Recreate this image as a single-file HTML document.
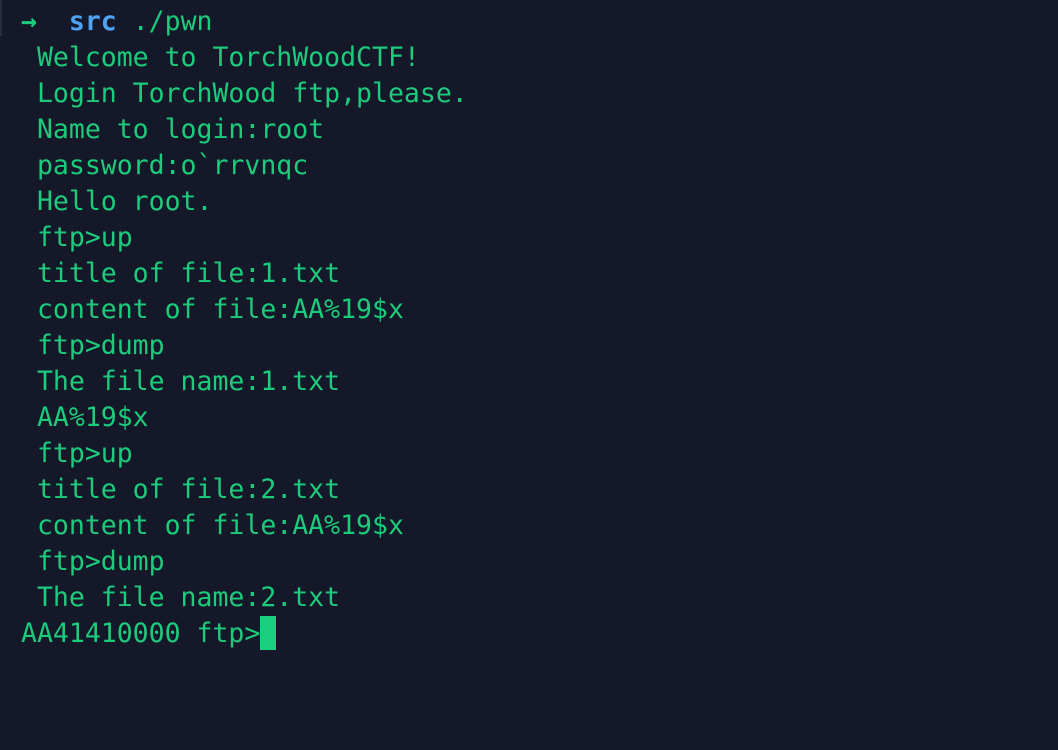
<!DOCTYPE html>
<html><head><style>
html,body{margin:0;padding:0;background:#151829;width:1058px;height:750px;overflow:hidden}
.t{position:absolute;left:21px;top:4px;font-family:"DejaVu Sans Mono","Liberation Mono",monospace;font-size:26.5px;line-height:36px;color:#1ccb7c;white-space:pre}
.b{color:#4da3f2;font-weight:bold}
.a{font-weight:bold}
.c{display:inline-block;width:16px;height:34px;background:#19d07e;vertical-align:-8px}
.edge{position:absolute;left:0;top:0;width:2px;height:36px;background:#2a2d3d}
</style></head><body>
<div class="edge"></div>
<div class="t"><span class="a">→</span>  <span class="b">src</span> ./pwn
 Welcome to TorchWoodCTF!
 Login TorchWood ftp,please.
 Name to login:root
 password:o`rrvnqc
 Hello root.
 ftp&gt;up
 title of file:1.txt
 content of file:AA%19$x
 ftp&gt;dump
 The file name:1.txt
 AA%19$x
 ftp&gt;up
 title of file:2.txt
 content of file:AA%19$x
 ftp&gt;dump
 The file name:2.txt
AA41410000 ftp&gt;<span class="c"></span></div>
</body></html>
